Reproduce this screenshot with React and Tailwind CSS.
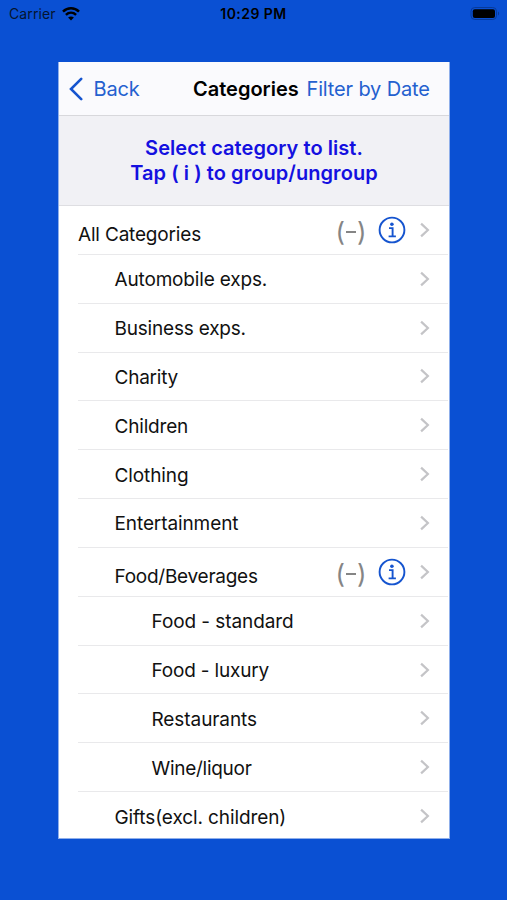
const rows = [
  { name: "All Categories", pad: "pl-0", group: true, track: "tracking-[-0.18px]" },
  { name: "Automobile exps.", pad: "pl-[36.5px]", track: "tracking-[-0.16px]" },
  { name: "Business exps.", pad: "pl-[36.5px]", track: "tracking-[-0.2px]" },
  { name: "Charity", pad: "pl-[36.5px]", track: "tracking-[-0.22px]" },
  { name: "Children", pad: "pl-[36.5px]", track: "tracking-[-0.18px]" },
  { name: "Clothing", pad: "pl-[36.5px]", track: "tracking-[-0.1px]" },
  { name: "Entertainment", pad: "pl-[36.5px]", track: "tracking-[-0.1px]" },
  { name: "Food/Beverages", pad: "pl-[36.5px]", group: true, track: "tracking-[-0.26px]" },
  { name: "Food - standard", pad: "pl-[73.5px]", track: "tracking-[-0.08px]" },
  { name: "Food - luxury", pad: "pl-[73.5px]", track: "tracking-[-0.18px]" },
  { name: "Restaurants", pad: "pl-[73.5px]", track: "tracking-[-0.08px]" },
  { name: "Wine/liquor", pad: "pl-[73.5px]", track: "tracking-[-0.28px]" },
  { name: "Gifts(excl. children)", pad: "pl-[36.5px]", track: "tracking-[-0.1px]" },
];

function Chevron() {
  return (
    <svg className="block h-4 w-[10px] shrink-0" viewBox="0 0 10 16" fill="none" stroke="#c4c4c7" strokeWidth="2.2">
      <path d="M1.1 1.6 7.9 8 1.1 14.4" />
    </svg>
  );
}

function Info() {
  return (
    <svg className="block size-7 shrink-0" viewBox="0 0 28 28" fill="none" stroke="#1554cf">
      <circle cx="14" cy="14" r="12.4" strokeWidth="1.9" />
      <circle cx="13.9" cy="8.2" r="1.8" fill="#1554cf" stroke="none" />
      <path d="M11 12.1h3.6v8.1M10.6 20.4h7.3" strokeWidth="1.9" />
    </svg>
  );
}

function Row({ name, pad, group, track }) {
  return (
    <li className="ml-[19.5px] mr-[1px] flex h-[48.85px] shrink-0 items-center border-b border-[#e9e9eb] pr-[18.5px]">
      <span className={`${pad} ${track} ${group ? "pt-[10px]" : "pt-[3px]"} grow whitespace-nowrap text-[19px] leading-6 text-[#111]`}>{name}</span>
      {group && (
        <>
          <span className="mr-[11.5px] flex h-7 w-[31px] items-center justify-between pt-[4px] text-[26px] leading-7 text-[#858585]">
            <span>(</span>
            <span className="h-[2px] w-[10px] bg-[#858585]" />
            <span>)</span>
          </span>
          <span className="mr-[13.5px]"><Info /></span>
        </>
      )}
      <Chevron />
    </li>
  );
}

export default function App() {
  return (
    <div className="flex h-[900px] w-[507px] flex-col overflow-hidden bg-[#0a50d3] font-['Inter','Liberation_Sans',sans-serif]">
      <header className="grid h-[62px] shrink-0 grid-cols-3 items-start px-[9px] pt-[5px] text-black">
        <div className="flex h-[17px] items-center gap-[6px] text-[14px] tracking-[0.1px] text-[#05152f]">
          Carrier
          <svg className="h-[14px] w-[18px]" viewBox="0 0 18 14" fill="none" stroke="#000" strokeWidth="2.5">
            <path d="M1 4.600c4.500-4.400 11.500-4.400 16 0M3.900 7.900c3-2.800 7.200-2.800 10.200 0" />
            <path d="m9 13.500-2.900-3c1.700-1.400 4.100-1.400 5.800 0z" fill="#000" stroke="none" />
          </svg>
        </div>
        <div className="h-[17px] text-center text-[14px] leading-[17px] font-semibold tracking-[0.45px] whitespace-nowrap">10:29 PM</div>
        <div className="flex h-[17px] items-center justify-end">
          <svg className="-mr-[2px] h-[14px] w-[30px]" viewBox="0 0 30 14">
            <rect x="1" y="0.500" width="25.500" height="12" rx="3.800" fill="none" stroke="#073a9a" />
            <rect x="2.800" y="2.200" width="22.200" height="8.800" rx="2" fill="#000" />
            <path d="M28 4.500v4c1.500-.7 1.500-3.300 0-4" fill="#073a9a" />
          </svg>
        </div>
      </header>
      <main className="ml-[58px] flex h-[777px] w-[392px] shrink-0 flex-col overflow-hidden border-x border-b border-[#8fafea] bg-white">
        <nav className="flex h-[54px] shrink-0 items-center border-b border-[#d8d8dc] bg-[#fafafd] pl-[9.500px] text-[20px] whitespace-nowrap text-[#2460cf]">
          <svg className="h-6 w-[14px]" viewBox="0 0 14 24" fill="none" stroke="#1554cf" strokeWidth="2.600" strokeLinecap="round">
            <path d="M12.200 1.800 2 12l10.200 10.200" />
          </svg>
          <span className="ml-[11px] w-[99.500px] tracking-[-0.2px]">Back</span>
          <span className="w-[113.500px] font-semibold text-black">Categories</span>
          <span className="tracking-[-0.15px]">Filter by Date</span>
        </nav>
        <section className="h-[90px] shrink-0 border-b border-[#dedee2] bg-[#f1f1f5] pt-[20px] text-center text-[20px] leading-[25px] font-semibold tracking-[0.06px] text-[#1410e0]">
          <p>Select category to list.</p>
          <p>Tap ( i ) to group/ungroup</p>
        </section>
        <ul className="-ml-[0.500px] flex flex-col">
          {rows.map((row) => <Row key={row.name} {...row} />)}
        </ul>
      </main>
    </div>
  );
}
